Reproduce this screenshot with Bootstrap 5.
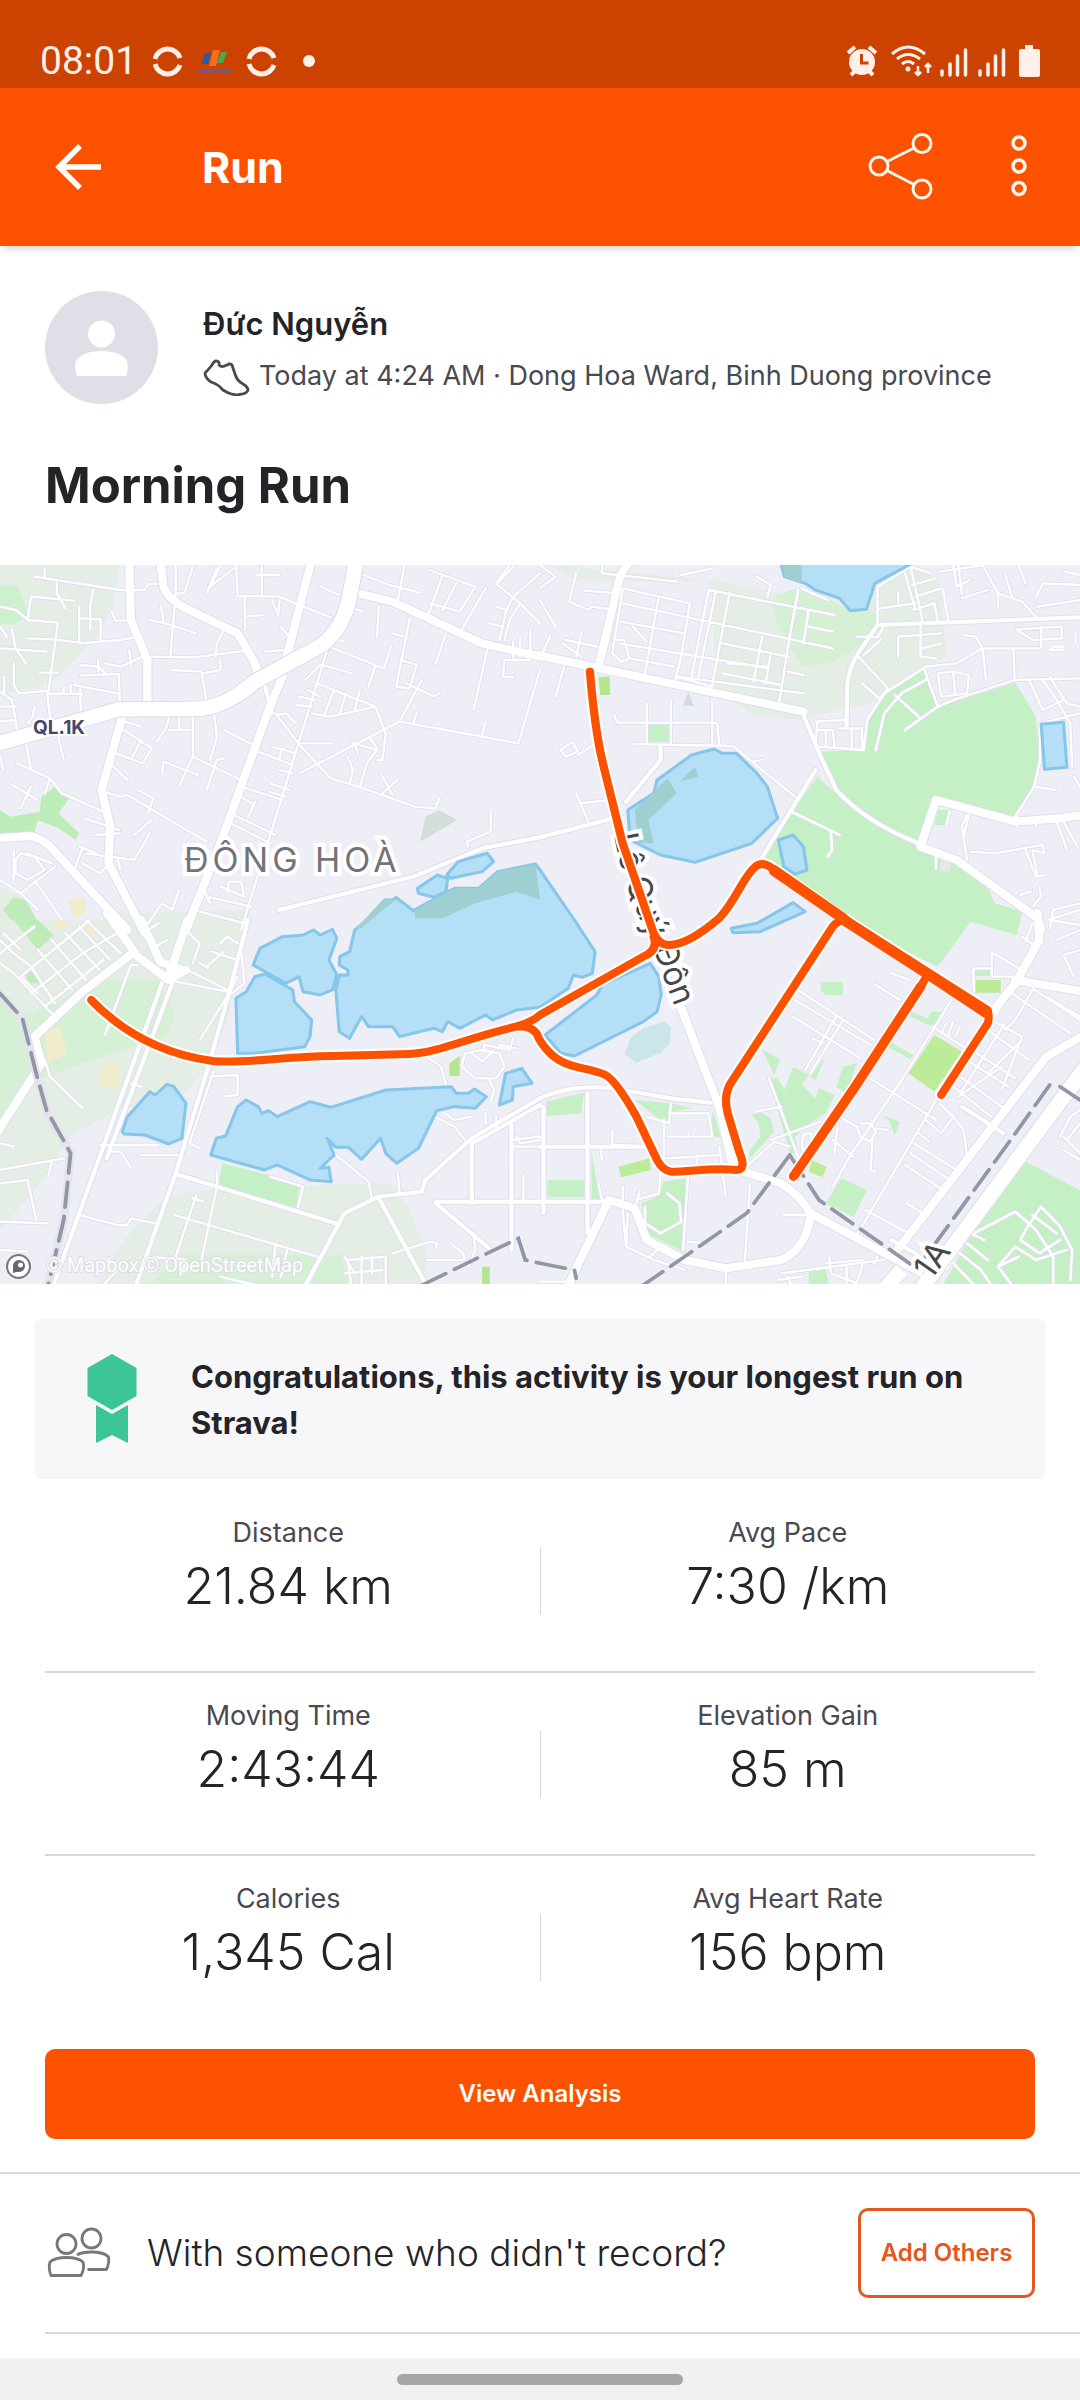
<!DOCTYPE html>
<html lang="en">
<head>
<meta charset="utf-8">
<meta name="viewport" content="width=device-width, initial-scale=1">
<title>Run</title>
<link rel="stylesheet" href="https://cdn.jsdelivr.net/npm/bootstrap@5.3.0/dist/css/bootstrap.min.css">
<style>
  body { font-family: Inter, "Noto Sans", sans-serif; color: #242428; background: #fff; }
  .status-strip { background: #cc4200; height: 88px; padding: 34px 40px 0 40px; color: #fff0ea; }
  .status-clock { font-family: Roboto, sans-serif; font-weight: 400; font-size: 39px; line-height: 54px; }
  .app-head { background: #fc5200; height: 158px; padding: 0 44px 0 41px; box-shadow: 0 6px 8px -4px rgba(0,0,0,.2); position: relative; }
  .app-head h1 { font-size: 43px; line-height: 56px; margin-left: 93px; }
  .plain-btn { background: none; border: 0; padding: 0; color: #fff; line-height: 0; }
  .share-btn { margin-right: 45px; }
  .side-pad { padding-left: 45px; padding-right: 45px; }
  .athlete { padding-top: 45px; gap: 45px; }
  .athlete-name { font-size: 31px; line-height: 40px; font-weight: 600; margin-top: 4px; }
  .meta-text { font-size: 27px; line-height: 36px; color: #494950; margin-top: 12px; }
  .activity-title { font-size: 49px; line-height: 60px; margin: 52px 0 49px; font-weight: 700; }
  .route-map { display: block; width: 100%; height: auto; background: #eeeff6; }
  .notice { background: #f7f7fa; border-radius: 8px; margin: 35px 34px 11px; padding: 35px 40px 33px 53px; gap: 54px; }
  .notice p { font-size: 31px; line-height: 46px; font-weight: 700; }
  .stat-row { height: 183px; border-bottom: 2px solid #d9d9dc; }
  .stat-row:last-child { border-bottom: 0; }
  .stat-cell { padding-top: 25px; text-align: center; flex: 1 1 50%; }
  .stat-cell dd { font-size: 50px; line-height: 60px; margin: 5px 0 0; font-weight: 300; }
  .stat-cell dt { font-size: 27px; line-height: 36px; color: #494950; font-weight: 400; }
  .stat-rule { width: 1px; height: 67px; margin-top: 58px; background: #d8d8dc; }
  .big-btn { --bs-btn-bg: #fc5200; --bs-btn-color: #fff; --bs-btn-hover-bg: #e34a00; --bs-btn-hover-color: #fff; border: 0; height: 90px; border-radius: 10px; font-size: 24px; font-weight: 600; margin: 10px 0 33px; }
  .others { border-top: 2px solid #d9d9dc; padding-top: 34px; padding-bottom: 34px; gap: 34px; }
  .others-text { font-size: 37px; line-height: 48px; font-weight: 300; }
  .add-btn { --bs-btn-color: #e5571d; border: 3px solid #e0591f; height: 90px; width: 177px; border-radius: 10px; font-size: 24px; font-weight: 600; padding: 0; }
  .inset-rule { margin-left: 45px; border-top: 2px solid #d9d9dc; }
  .nav-strip { background: #f1f1f1; height: 42px; }
  .nav-pill { width: 286px; height: 11px; border-radius: 6px; background: #a6a6a6; }
  .place-label { font-size: 34px; letter-spacing: 4px; fill: #737379; stroke: #fff; stroke-width: 8px; paint-order: stroke; }
  .ref-label { font-size: 19px; font-weight: 700; fill: #47476b; stroke: #fff; stroke-width: 4px; paint-order: stroke; }
  .road-label { font-size: 33px; fill: #46464c; stroke: #fff; stroke-width: 8px; paint-order: stroke; }
  .credit-label { font-family: Roboto, sans-serif; font-size: 20px; fill: #fff; stroke: #dcdce4; stroke-width: 2px; paint-order: stroke; }
</style>
<script src="https://cdn.jsdelivr.net/npm/bootstrap@5.3.0/dist/js/bootstrap.bundle.min.js"></script>
</head>
<body class="d-flex flex-column min-vh-100">

<div class="status-strip d-flex align-items-center justify-content-between">
  <div class="d-flex align-items-center">
    <span class="status-clock">08:01</span>
    <svg class="ms-3" width="163" height="32" viewBox="156 45 163 32" aria-hidden="true">
      <g fill="none" stroke="#fff0ea" stroke-width="5">
        <path d="M158 59A13 13 0 0 1 183 58M158 64A13 13 0 0 0 183 65"/>
        <path d="M252 59A13 13 0 0 1 277 58M252 64A13 13 0 0 0 277 65"/>
      </g>
      <path fill="#1b62ae" d="M208 53h6l-3 11h-6z"/><path fill="#f37021" d="M216 50h7l-4 16h-7z"/><path fill="#44ad4b" d="M224 52h6l-4 11h-6z"/>
      <path stroke="#6c5a92" stroke-width="3" stroke-dasharray="3 1" d="M201 71H234"/>
      <circle cx="312" cy="61" r="6" fill="#fff0ea"/>
    </svg>
  </div>
  <svg width="194" height="34" viewBox="846 44 194 34" aria-hidden="true" fill="#fff0ea">
    <circle cx="862" cy="62" r="13"/><path d="M848 53l7-6M876 53l-7-6M851 75l5-5M873 75l-5-5" stroke="#fff0ea" stroke-width="4"/>
    <path d="M861.500 54v9h7" fill="none" stroke="#cc4200" stroke-width="3"/>
    <g fill="none" stroke="#fff0ea" stroke-width="3"><path d="M892 54Q908 40 925 54M897 59Q908 50 920 59M902 64Q908 59 914 64"/><path d="M918 66v9M915 72l3 3 3-3M928 73v-9M925 67l3-3 3 3" stroke-width="2.500"/></g>
    <circle cx="908" cy="69" r="2.500"/>
    <g stroke="#fff0ea" stroke-width="3.500" stroke-linecap="round"><path d="M942 71v4M950 64v11M957.500 56v19M965.500 50v25M980 71v4M988 64v11M995.500 56v19M1003.500 50v25"/></g>
    <path d="M1025 45h8v4h5q2 0 2 2v24q0 2-2 2h-17q-2 0-2-2V51q0-2 2-2h4z"/>
  </svg>
</div>

<header class="app-head d-flex align-items-center">
  <button class="plain-btn ps-2 ms-1" type="button" aria-label="Back">
    <svg width="56" height="50" viewBox="54 142 56 50" fill="none" stroke="#fff" stroke-width="5.500"><path d="M81 146L60 167L81 188M60 167H102"/></svg>
  </button>
  <h1 class="fw-bold text-white mb-0 me-auto">Run</h1>
  <button class="plain-btn share-btn" type="button" aria-label="Share">
    <svg width="66" height="70" viewBox="866 132 66 70" fill="none" stroke="#fff6ee" stroke-width="3"><circle cx="878" cy="166" r="9"/><circle cx="921" cy="143.500" r="9"/><circle cx="921" cy="189" r="9"/><path d="M886 161.500L913 148M886 170.500L913 184.500"/></svg>
  </button>
  <button class="plain-btn" type="button" aria-label="More options">
    <svg class="ms-4" width="34" height="70" viewBox="1002 132 34 70" fill="none" stroke="#fff6ee" stroke-width="3.500"><circle cx="1019" cy="143" r="6"/><circle cx="1019" cy="166" r="6"/><circle cx="1019" cy="188.500" r="6"/></svg>
  </button>
</header>

<main>
  <section class="side-pad">
    <div class="athlete d-flex align-items-center">
      <svg class="flex-shrink-0" width="113" height="113" viewBox="0 0 113 113" role="img" aria-label="Profile photo"><circle cx="56.500" cy="56.500" r="56.500" fill="#dfdfe8"/><circle cx="56.500" cy="43" r="13.500" fill="#fff"/><path fill="#fff" d="M32 85q-3-8-1-15q6-10 25.500-10T82 70q2 7-1 15z"/></svg>
      <div>
        <div class="athlete-name">Đức Nguyễn</div>
        <div class="d-flex align-items-center meta-text">
          <svg class="me-2 flex-shrink-0" width="48" height="40" viewBox="202 356 48 40" fill="none" stroke="#494950" stroke-width="2.800" stroke-linejoin="round"><path d="M204 373Q204 378 210 382Q217 384 222 390Q231 396 238 394.500Q246 394 247 390Q247 387 242 384Q236 381 234 374L231 365Q229 363 226 365Q220 368 218 365Q219 361 215 361Q213 361 211 365Q208 369 204 373Z"/></svg>
          <span>Today at 4:24 AM · Dong Hoa Ward, Binh Duong province</span>
        </div>
      </div>
    </div>
    <h2 class="activity-title">Morning Run</h2>
  </section>

  <svg class="route-map" viewBox="0 0 1080 719" role="img" aria-label="Map of the run">
    <defs>
      <!-- The map is drawn on four tiles: north-west, north-east, south-west, south-east -->
      <g id="roads-s" fill="none" stroke-linejoin="round" stroke-linecap="round">
        <g transform="translate(0,-5) scale(.3444,.3333)">
          <path d="M100,50L350,90H420L430,72H455M130,25V55M165,60V100L190,145M90,110L215,122M90,110L80,180L168,188L140,400M230,140V250L350,240L390,232M235,175L292,178V240M270,90L262,140V210M325,155L335,182H372M0,140L45,150L80,178M0,265L135,275M35,210L45,265L75,310M80,235L150,238L235,248M0,200L20,230M40,310V375L55,400L140,392M115,338H170M232,315L285,320L305,340M285,295V335M235,347L345,342M305,310L350,320L415,290M375,270L380,320M345,345L348,430M140,400L240,402M215,375L340,400M232,380L235,460M185,380V400M205,375V400M0,440H45M0,485L45,480M0,395L35,420L50,510M12,350V400M137,400L145,470L165,510L185,600M100,440L95,470L80,490M75,550L90,630L50,610M90,630L145,655L180,700L300,755M145,655L130,700M35,675L110,720M60,745L90,680M0,590L10,630M435,290L560,292L720,272M500,330L585,335L600,425M590,340L640,330V300M650,210L630,250L625,290M510,15V100L495,285M435,180L480,190L570,220M468,140L475,190M510,100H535L560,20M600,100L630,25M640,15L610,80L660,40L690,15M685,15L690,108L810,110L960,172M760,20V105M745,45H810M790,120L808,165L812,120M712,170L765,165M710,110L712,210M815,200L840,230M770,275L850,268M560,450V590L520,680M495,460L480,510L455,545M490,510H550M520,460V510M620,450L630,530L610,600M560,590L700,660M650,510L745,560M600,690L630,600L650,595M470,640L475,605L575,645M360,510L440,565L415,610L335,580M410,540L385,590M300,695L350,710L370,705L600,845M400,690L445,715L430,760M440,780L390,825M320,610L370,660M245,775L345,810M275,825L350,820M350,480L410,500"/>
          <path d="M1055,45L1130,75L1220,98M930,80L985,105M1175,15L1155,120M1245,30L1380,80L1335,155L1250,130M1285,45L1245,160M1325,70L1285,150M1410,85L1340,210M1295,220L1265,310M1415,270L1375,450M1025,145L1055,155M1100,140L1095,230M1190,175L1150,380L1190,385L1210,315L1165,300M1140,220L1170,230M1135,260L1115,325L1085,315M970,235L1000,245M955,260L1090,315L1070,380M950,270L700,1110M935,315L1020,340M885,360L930,315M920,370L1090,440L960,470L905,460M970,390L940,470M1005,400L985,465M1045,390L1030,450M865,410L915,420M860,435L905,440M1090,440L1120,520M1225,360L1160,485L870,640M1160,485L1505,550L1568,330M1180,370L1260,410L1275,400M1210,460L1200,490M1400,525L1410,485M800,460L870,555L960,655L1040,680L1205,740L1265,745L1275,715M805,465L830,460L860,490M870,550H965M1120,520L1110,600H1095M1025,550L1095,570L1065,610L1045,680M1030,555L1040,580M1075,535L1095,565M1010,590L1025,630L1015,670M1105,640L1140,705M1155,660L1110,700M790,560L860,580M750,575L850,615M810,630L850,640M820,565L810,600M785,670L840,690M780,695L830,710M700,680L820,720M680,765L800,825M670,790L785,850M740,725L720,775M690,705L730,730M1360,860L1355,845L1425,815V755M1440,75L1490,20M1480,15L1440,70L1510,130L1568,190M1440,140L1470,150L1490,110L1568,40M1470,150L1450,240M1510,130L1480,180L1465,240M1420,190L1460,200M1490,245V300M1510,230V290M1540,210V290M1460,350L1465,300H1540M1460,350L1490,352M895,390L930,410M0,960L60,1000L160,920M40,870V960M60,880L100,890L130,930L80,960L45,940V900ZM80,880L150,910M100,960L180,1080M60,1000L110,1050M220,920L240,860M250,880L390,900L435,820M230,860L280,880M340,890L350,930M240,910L290,940L310,920M430,1090L470,1030L500,1050L520,990M600,1010L730,1040M580,1055L710,1090M640,980L710,1010L700,965H665L660,1000M590,985L610,1030"/>
        </g>
        <g transform="translate(540,-5) scale(.3444,.3333)">
          <path d="M0,15L45,50L0,85M0,120L45,200M180,15V40L400,65M410,45L500,25M240,85L435,130L410,290L390,370M345,110L305,340M240,130L850,265M235,185L420,220M230,250L520,300L665,325M260,295L390,320M215,240H245L260,295L235,305L210,280L240,90M270,200L310,245M490,90L440,350M510,95L460,350M550,100L500,375M490,90L855,165M750,90L725,230L695,425M760,85L835,120M630,50L670,75L660,110M780,150L765,250M780,200L850,215M645,230L620,365M670,280L655,370M530,250L720,290M545,310L660,320M400,350L765,400M530,340L700,375M395,350L500,380M720,335L765,345M130,92L225,100M105,40L85,125L140,150L150,140L215,150M75,240L165,260M65,250L120,290M120,220L105,290M70,320L45,410M30,225L0,300M215,465L225,488H500L515,490L520,550M275,552L560,558L740,710M310,430V550M380,425V550M500,425V550M620,605L645,600M60,570L95,545L110,575L75,590ZM110,585L155,555M105,700L140,785M115,730L205,720M980,80V190M980,80L1075,20L1135,40M1060,40L1085,130M985,145L1090,130L1085,150L1145,130L1155,185M1040,95V130M1075,15L1110,180M1080,75L1150,55M1090,110L1165,85M1170,90L1185,180M1200,15L1210,80L1250,60M1215,15L1225,100M1285,15L1330,100L1400,125L1440,170M1330,100V145M1350,40L1370,110M1225,115L1300,90M1390,15L1410,70M1440,110L1460,70L1568,75M1525,35L1568,45M1445,140L1568,120M1160,35L1290,15M990,240L940,285M920,230L980,232L1000,195M925,290L1010,385L985,420M935,370L985,415M1105,185V290L1150,295M1040,290V230L1165,220M1110,265L1165,250M1230,225L1265,230L1285,265H1455V200M1285,265L1295,360M1375,265L1378,360M1385,208L1515,200V235L1430,240L1385,210M1480,270H1520V260H1490ZM1120,320L1210,310L1285,265M1120,320L1000,400L950,480L940,570L810,560M1115,325L1155,440L1060,510M1155,440L1200,420L1378,360L1568,355M1155,340L1200,335L1245,345L1240,400L1165,410ZM1200,335L1205,400M1120,360L1050,400L1000,460L975,570M1030,405L1105,475M800,485L890,480M805,510H850L855,560M870,505H935V565M905,505V565M830,510V560M800,560L805,485M1420,360L1460,450L1520,420M1460,360L1500,420L1540,490M1480,350L1530,430L1568,440M1380,770L1435,680L1452,600V490L1568,460M1540,490L1545,620M1435,680L1495,690M1550,650L1568,680M730,755L870,825M845,815L848,870L835,890M1150,885V925M1190,755L1180,795M1240,765L1225,800L1240,900M1245,765L1230,830M1500,785L1530,870M1520,785L1560,860M1385,770V800M1440,770V800M1250,875L1320,880L1460,855L1465,880L1430,870M1410,870L1440,950L1470,945M1430,870L1445,950M1395,1005L1425,995M1450,980L1455,1010L1430,1040M1480,1110L1490,1050L1568,1030M1475,1080L1568,1050M1555,220V250"/>
        </g>
        <g transform="translate(0,355) scale(.3444,.3333)">
          <path d="M0,60L40,100L90,140L160,250M0,130L40,160L150,280M60,170L190,60L260,0M0,100L100,20M150,60L250,180M190,40L290,150M110,90L210,210M230,20L320,120M90,220L240,100L340,40M130,260L300,120M60,170L110,220M250,0L350,100M10,40L60,90M400,135H380L310,330L305,345M430,30L460,10M445,85L485,60M550,40L580,70L560,130M600,140L650,95M640,70L660,50L690,70M545,150L660,210M510,185L660,215M615,95L690,120M580,130L605,145M690,170L665,220L580,360M700,90L710,190L660,230M130,420L145,470L240,565M0,670L40,680M0,750L185,715M140,770L150,725M0,790L80,780L105,900M0,905L140,910M230,885L340,915H370L380,895L450,910M0,990L80,995M290,675H460M320,695H350L378,740M410,705H515M610,470L690,465L690,525L650,530M620,455L550,670L580,685M380,490L410,500M505,885L920,1010M570,825L510,1010M630,755V800L585,1020M560,835L590,845M800,975L790,1070M835,985L815,1070M785,770L880,800L865,860M970,700L1070,785L1080,835M1155,760L1160,820M1240,410L1280,440L1295,495M1350,400L1400,390L1450,400L1465,440L1440,475H1380L1340,440ZM1370,400L1400,425L1430,395M1405,370V395M1420,480L1435,510L1425,545M1410,375L1480,390L1490,355M1450,375L1500,385M1260,590L1320,620L1350,660M1290,580L1320,600L1370,590M1410,580V610M1440,590V620M1490,660L1568,650M1500,650L1510,670L1568,660M1490,680H1568M1520,765V840M430,1010L540,1020L530,1060M1000,1010L1030,1060M1050,1010V1095M1020,1095L1010,1020L1120,1010V1095M1080,1010V1060M1140,1000L1250,965L1270,970L1265,985M1310,970L1345,1000L1350,1020L1240,1020M1375,940L1380,990L1360,1040M1000,1060L1110,1050M640,1070L740,1095M340,1050L300,1095"/>
        </g>
        <g transform="translate(540,355) scale(.3444,.3333)">
          <path d="M750,210L970,360M740,240L960,375M735,290L930,415M860,290L770,450M880,300L785,460M790,355L820,370M975,195L1045,240M1020,160L1075,180M935,460L1150,600M1195,240L1050,480L905,700L850,800M665,475L760,740M670,660L815,605M625,575L700,560M605,735L680,665L725,680M760,660L770,640L790,640L785,690L765,700ZM870,590L920,620L930,650L960,665L975,635L960,610L930,610M975,625L1010,630M865,610L855,700M850,660L910,710M965,665L960,750L975,755M1150,540L940,910L910,960M1160,550L1200,590L1230,630L1240,710M1120,600L1165,640L1200,590M1100,640L1130,665M1085,670L1210,750M1075,700L1190,780M1060,735L1170,810M1200,500L1310,590M1220,470L1340,560M1215,530L1340,440M1240,420L1360,500M1260,395L1380,475M1300,330L1420,420M1310,300L1400,350L1340,510M1350,310L1220,520M1390,370L1300,460M1380,300L1350,330M1370,220L1540,340M1430,210L1380,300M1430,205L1568,300M1470,230L1568,290M1310,95L1390,145M1312,95V170H1385M1260,215L1258,145H1310M1140,320L1235,385M1180,310L1165,340M1200,305L1185,345M1220,320L1205,350M945,870L1060,935M1065,850L1110,880M705,885H780M610,790L595,1020M540,830L530,760M375,580H490L500,650H370M360,600V720M310,590L375,610L380,550M365,715L520,705M520,680L530,750M455,705V730M430,640V655M340,680L205,675M210,630V670M175,680L180,720M170,790L180,840L210,850M240,800V850M290,810L280,850M350,760L345,820L280,840M430,770L415,990M305,860V910L350,940L410,905L405,850L370,820M240,870L250,980L330,1020L420,1050M250,980L255,880M430,965L480,970M320,1010L340,990M700,1060L1000,1020M840,1010L845,1060L920,1090L940,1020L830,1030M720,1070L730,1095M890,1040V1095M970,1030L980,1010M540,1050V1095M690,1080L760,1070M1410,65L1430,10M1400,50L1440,80M1480,0L1568,15M1500,60L1568,30M1520,105L1550,170M1520,105L1568,90M1360,220L1300,330M1180,1050L1250,940L1290,960M1260,940L1380,875L1440,930L1490,1010V1095M1410,930L1455,860L1510,920L1545,990L1540,1080M1380,980L1440,1020L1530,990M1420,910L1395,960L1450,1000L1510,960M1380,980L1330,1040L1370,1095M1330,1040L1390,1010M1220,1000L1280,1050L1310,1095M1240,970L1300,1020M1200,1030L1260,1095M1430,885L1500,940M1510,650L1540,590L1568,570M1530,660L1568,610M1520,690L1568,720M1520,650L1568,700M0,1085H80"/>
        </g>
      </g>
      <g id="roads-m" fill="none" stroke-linejoin="round" stroke-linecap="round">
        <g transform="translate(0,-5) scale(.3444,.3333)"><path d="M810,1050L1200,950L1400,865L1568,832M770,380L790,460"/></g>
        <g transform="translate(540,-5) scale(.3444,.3333)"><path d="M0,832L215,775M350,560V600L250,725M765,465L815,590L860,690Q950,790 1100,850M800,630L640,900M980,195L1568,172M980,195L920,285Q895,330 892,380L890,500"/></g>
        <g transform="translate(0,355) scale(.3444,.3333)"><path d="M500,190L310,715M470,190L300,680L150,1110M605,440L510,760L390,1110M720,0L665,220L605,440M510,762L975,910M880,1110L1000,880L1100,830L1225,815L1235,780L1370,655L1568,535M1265,845H1568M1370,655V850M1485,615V990M1265,850L1420,985M1568,555L1380,665M1100,835L1240,1100"/></g>
        <g transform="translate(540,355) scale(.3444,.3333)"><path d="M0,535Q80,495 200,503L380,535L495,548M0,680H340M0,845H200M10,560V880M138,520V940M1225,560L1345,640M1020,960L1090,1000"/></g>
      </g>
      <g id="roads-l" fill="none" stroke-linejoin="round" stroke-linecap="round">
        <g transform="translate(0,-5) scale(.3444,.3333)"><path d="M375,0L380,180L428,300V440M465,0L475,80Q490,120 540,145L690,220L740,310L755,360M905,0L830,300M355,470L295,690L320,800L315,910L420,1120M820,350L780,450L640,850L540,1110M1040,100L1140,125L1400,250L1568,290M-10,835L90,828Q130,840 150,865L370,1110"/></g>
        <g transform="translate(540,-5) scale(.3444,.3333)"><path d="M-10,285L765,455M265,0Q235,30 225,80L170,320M1580,765L1510,775L1380,785L1150,720L1105,860L1210,900L1445,1075L1455,1110"/></g>
        <g transform="translate(0,355) scale(.3444,.3333)"><path d="M310,-20L400,110L490,180L540,150M410,0L465,125L530,150M545,0L490,170M390,95L240,215L100,350L120,430L-10,640"/></g>
        <g transform="translate(540,355) scale(.3444,.3333)"><path d="M405,250L520,560L560,740M590,755L700,790Q760,830 785,880L1110,1060M785,890Q770,990 700,1020L540,1045L420,1020L310,960L275,865L200,840L80,1100M1445,-20L1450,60L1380,190L1310,280M1380,180L1580,215M1580,345L1470,410L1030,1000"/></g>
      </g>
      <g id="roads-xl" fill="none" stroke-linejoin="round">
        <g transform="translate(0,-5) scale(.3444,.3333)"><path d="M-10,552L345,448L570,447Q650,445 740,365L935,255Q1000,200 1015,110L1035,0"/></g>
        <g transform="translate(540,355) scale(.3444,.3333)"><path d="M1600,420L1090,1130M1050,1050L990,1120"/></g>
      </g>
    </defs>

    <!-- land cover -->
    <g transform="translate(0,-5) scale(.3444,.3333)">
      <path fill="#e4eee4" d="M0,15H345L330,130L280,230L170,350L110,385L0,400ZM0,980L60,1010L110,1115H0ZM330,1060H420L730,1050L710,1115H330Z"/>
      <path fill="#cdf0cd" d="M0,75H50L85,170L30,195L0,190Z"/>
      <path fill="#bdecb8" d="M0,750L30,770L115,755L120,710L160,680L205,710L170,760L230,820L220,840L170,805L110,780L100,820L0,830ZM10,1050L40,1010L75,1020L125,1115H60Z"/>
      <path fill="#d3dedb" d="M1220,845L1235,770L1275,750L1328,780Z"/>
    </g>
    <g transform="translate(540,-5) scale(.3444,.3333)">
      <path fill="#e4eee4" d="M30,15L90,55L190,60L370,65L500,60L700,100L1070,15L1160,60L1180,290L960,430L740,480L620,465L510,380L500,110L490,60Z"/>
      <path fill="#d5f0d3" d="M700,100L760,80L900,150L980,160L960,240L850,305L765,320L690,200L675,120Z"/>
      <path fill="#c5efc5" d="M1115,320L1155,440L1380,368L1440,470L1450,600L1430,690L1380,770L1150,720L1100,850L980,800L860,700L805,575L940,570L950,490L1000,400ZM805,650L860,700L980,800L1100,855L1200,890L1300,980L1320,1030L1400,1055L1385,1125L1250,1085L1155,1220L880,1080L640,900L730,760ZM313,495H378V545H313ZM1155,750H1195L1185,795H1145Z"/>
      <path fill="#b5e68c" d="M170,352L202,350L204,405L175,405Z"/><path fill="#cfdddb" d="M415,437L430,397L447,437Z"/>
      <path fill="#e6e6ec" d="M1165,895L1195,900L1190,935H1160Z"/>
    </g>
    <g transform="translate(0,355) scale(.3444,.3333)">
      <path fill="#e4eee4" d="M0,0H720L660,300L600,440L540,520L350,570L210,640L110,800L0,930ZM520,820L700,800L1130,790L1180,850L1240,1000L1230,1095H280L360,960L460,850Z"/>
      <path fill="#d6f0d6" d="M310,180H460L510,290L480,350L240,430L110,480L60,540L0,620V210L60,290L200,230ZM530,1005H990L1010,1095H430Z"/>
      <path fill="#bdecb8" d="M40,0H110L155,45L110,90ZM70,155L90,145L120,190L85,190Z"/>
      <path fill="#c5efc5" d="M645,730L870,790L860,865L635,800Z"/>
      <path fill="#b5e68c" d="M1305,430L1335,408V468H1305ZM1400,1040H1422V1095H1400Z"/>
      <path fill="#efedcb" d="M130,330L175,320L195,400L140,430ZM300,430L350,425L340,510L285,495ZM195,-60L250,-70V-25L215,-10ZM150,10L180,-10L195,15L170,35ZM235,25L255,10L275,45L255,60Z"/>
    </g>
    <g transform="translate(540,355) scale(.3444,.3333)">
      <path fill="#c5efc5" d="M18,545L128,518L120,580L20,588ZM22,780H130V832H22ZM815,185H880V225H830L815,210ZM1258,148H1310V168H1258ZM1075,275L1125,295L1135,275H1168L1140,320L1075,290ZM1010,362L1085,405L1075,418L1010,380ZM645,388L697,418L680,465ZM735,440L780,465L760,495L800,535L810,505L855,525L830,580L790,605L740,650L750,700L725,700L665,475H690L710,510ZM830,408L800,480L785,470ZM880,440L920,430L890,520L860,500ZM615,585L640,575L670,595L680,635L640,680L605,720L610,690L640,650L635,610ZM275,540L380,550L440,565L380,575L375,610L350,600ZM500,570L525,650H500ZM358,785L425,775L415,995L310,940L295,850L350,825ZM150,700L175,850H150ZM875,775L950,810L910,890L830,850ZM990,585L1045,605L1030,645L1012,600ZM1410,725L1568,810V1095H1170L1250,950ZM780,1055L830,1050L840,1095H780Z"/>
      <path fill="#bcec98" d="M1262,180H1338V218H1262ZM1145,345L1225,395L1145,515L1070,460ZM228,740L318,715L322,750L235,772ZM790,720L832,740L820,772L780,755Z"/>
      <path fill="#cbe6ea" d="M245,402L265,350L300,325L360,305L380,320L378,370L350,398L280,428Z"/>
    </g>

    <!-- roads: edge first, then white surface -->
    <use href="#roads-s" stroke="#e0deed" stroke-width="12"/>
    <use href="#roads-m" stroke="#e0deed" stroke-width="18"/>
    <use href="#roads-l" stroke="#e0deed" stroke-width="30"/>
    <use href="#roads-s" stroke="#fff" stroke-width="7"/>
    <use href="#roads-m" stroke="#fff" stroke-width="12"/>
    <use href="#roads-l" stroke="#fff" stroke-width="24"/>
    <use href="#roads-xl" stroke="#e0deed" stroke-width="50"/>
    <use href="#roads-xl" stroke="#fff" stroke-width="43"/>

    <!-- water -->
    <g fill="#b4dff7" stroke="#86c6eb" stroke-width="9" stroke-linejoin="round">
      <g transform="translate(0,-5) scale(.3444,.3333)"><path d="M1297,945L1330,905L1415,880L1433,905L1400,935L1310,955ZM1212,985L1270,945L1300,955L1295,995L1260,1012L1215,1000Z"/></g>
      <g transform="translate(0,355) scale(.3444,.3333)"><path d="M1030,30L1150,-68L1200,-28L1320,-95H1390L1445,-145L1555,-168L1568,-150L1668,0L1728,95L1720,160L1690,172L1665,165L1650,205L1568,262L1500,270L1430,300L1410,285L1335,325L1300,305L1285,335L1260,325L1160,350L1140,320H1070L1050,290L1015,355L985,335L975,210L985,165H1010V150L985,135L987,110L1015,95ZM735,135L755,85L820,50L880,45L910,30L930,45L965,28L978,55L955,120L978,165L965,210L930,225L880,215L868,170L830,190ZM685,235L715,215L740,170L770,162L850,210L855,245L905,300L900,350L885,380L740,400H690ZM355,635L370,590L435,515L450,525L485,493L505,500L540,550L528,655L490,672L420,645L360,642ZM612,705L628,655L655,648L690,560L715,540L750,560L760,580L780,572L805,590L900,545L960,562L1120,510L1310,500L1325,520H1360L1378,507L1412,530L1380,565L1320,560L1268,572L1215,685L1152,730L1120,700L1105,655L1050,718L1012,682H975L950,655L970,705L930,745L955,742L962,785L900,780L805,735L768,750ZM1450,555L1468,460L1515,445L1545,490L1490,500L1488,540Z"/></g>
      <g transform="translate(540,-5) scale(.3444,.3333)"><path d="M698,5L710,50L770,70L800,90L870,115L900,152L948,148L972,70L1090,5ZM255,750L330,700L340,660L440,585L505,567L530,580H570L630,640L660,680L690,775L615,850L450,907L350,885L262,840ZM692,840L735,825L765,860L775,930L740,942L708,920ZM555,1105L630,1090L735,1028L770,1055L640,1115L560,1118ZM1455,492L1520,487L1530,622L1465,628Z"/></g>
      <g transform="translate(540,355) scale(.3444,.3333)"><path d="M15,345L165,225L180,195L320,130L345,170L352,225L340,275L300,305L100,408L60,400Z"/></g>
    </g>
    <g fill="#a0cfd2">
      <g transform="translate(0,-5) scale(.3444,.3333)"><path d="M1205,1075V1050L1320,985H1390L1445,935L1555,912L1568,1020L1500,995L1380,1030L1285,1075ZM1035,1105L1115,1015L1150,1015L1050,1105Z"/></g>
      <g transform="translate(540,-5) scale(.3444,.3333)"><path d="M335,690L370,655L397,700L315,780L330,850H285L275,750ZM405,665L450,620L460,650ZM705,15H760V72L710,50Z"/></g>
    </g>

    <!-- ward boundary -->
    <g fill="none" stroke="#9297a5" stroke-width="11" stroke-linecap="round" stroke-dasharray="75 28">
      <g transform="translate(0,355) scale(.3444,.3333)"><path stroke="#e4e3ee" stroke-width="24" stroke-dasharray="none" d="M0,220L65,295L105,460L135,570L205,700L185,900L140,1095"/><path d="M0,220L65,295L105,460L135,570L205,700L185,900L140,1095M1125,1098H1220L1505,955L1525,1020L1568,1030"/></g>
      <g transform="translate(540,355) scale(.3444,.3333)"><path d="M1480,495L1370,655L1120,1010M725,705L600,880L420,1010L300,1095M725,705L810,840L1100,1050M1510,500L1568,540M0,1030L100,1050L105,1075"/></g>
    </g>

    <!-- labels under the route -->
    <path id="road-line" fill="none" d="M614,270C624,325 640,352 656,392L700,510"/>
    <text class="road-label"><textPath href="#road-line">Lê Quý Đôn</textPath></text>
    <text class="place-label" x="184" y="307">ĐÔNG HOÀ</text>
    <text class="ref-label" x="33" y="169">QL.1K</text>
    <text class="road-label" transform="translate(931,716) rotate(-55)">1A</text>

    <!-- run route -->
    <defs><g id="route" fill="none" stroke-linecap="round" stroke-linejoin="round" transform="translate(540,355) scale(.3444,.3333)"><path d="M-1303,240C-1200,350 -1080,405 -950,423C-860,432 -760,410 -600,408L-380,402C-300,400 -200,350 -70,320Q-20,305 0,285L300,110Q345,90 330,50M145,-745Q160,-560 185,-460L240,-230L325,25Q340,75 375,75Q430,75 520,-5C570,-60 590,-130 625,-160Q645,-178 675,-155L880,-5L1300,270Q1305,300 1300,310L1165,525M890,0Q865,0 850,20L560,480Q530,520 545,580L580,700Q600,750 570,750C500,742 440,755 380,755Q355,750 340,720L280,590Q220,480 190,465C140,440 80,450 30,400Q0,370 -10,340Q-30,315 -70,320M1125,165L1105,200L915,500L735,770"/></g></defs>
    <use href="#route" stroke="#fff" stroke-width="36"/>
    <use href="#route" stroke="#fc5200" stroke-width="24"/>
    <path transform="translate(540,355) scale(.3444,.3333)" fill="none" stroke="#fc5200" stroke-width="32" stroke-linecap="round" stroke-linejoin="round" d="M880,-2L1120,158L1293,276M680,-148L880,-5"/>
    <path transform="translate(540,355) scale(.3444,.3333)" fill="none" stroke="#fc5200" stroke-width="28" stroke-linecap="round" stroke-linejoin="round" d="M1105,200L915,500L737,768"/>

    <!-- attribution -->
    <circle cx="18.500" cy="701.500" r="11.500" fill="#fff" stroke="#77787f" stroke-width="2"/>
    <circle cx="19" cy="701" r="6" fill="#66676e"/><path fill="#66676e" d="M13 708v-8l7 6z"/><circle cx="20.500" cy="700" r="2.500" fill="#fff"/>
    <text class="credit-label" x="46" y="707">© Mapbox © OpenStreetMap</text>
  </svg>

  <section class="notice d-flex align-items-center">
    <svg class="flex-shrink-0" width="50" height="92" viewBox="87 1354 50 92" fill="#3bc597" aria-hidden="true"><path d="M112 1354L136.500 1368V1396L112 1410L87.500 1396V1368Z"/><path d="M96 1405L112 1414L128 1405V1443L112 1435L96 1443Z"/></svg>
    <p class="mb-0">Congratulations, this activity is your longest run on Strava!</p>
  </section>

  <section class="side-pad">
    <dl class="mb-0">
      <div class="stat-row d-flex">
        <div class="stat-cell pe-2"><dt>Distance</dt><dd>21.84 km</dd></div>
        <div class="stat-rule"></div>
        <div class="stat-cell"><dt>Avg Pace</dt><dd>7:30 /km</dd></div>
      </div>
      <div class="stat-row d-flex">
        <div class="stat-cell pe-2"><dt>Moving Time</dt><dd>2:43:44</dd></div>
        <div class="stat-rule"></div>
        <div class="stat-cell"><dt>Elevation Gain</dt><dd>85 m</dd></div>
      </div>
      <div class="stat-row d-flex">
        <div class="stat-cell pe-2"><dt>Calories</dt><dd>1,345 Cal</dd></div>
        <div class="stat-rule"></div>
        <div class="stat-cell"><dt>Avg Heart Rate</dt><dd>156 bpm</dd></div>
      </div>
    </dl>
    <button class="btn big-btn w-100" type="button">View Analysis</button>
  </section>

  <section class="others side-pad d-flex align-items-center">
    <svg class="flex-shrink-0" width="68" height="54" viewBox="45 2225 68 54" fill="none" stroke="#77777e" stroke-width="2.800" stroke-linejoin="round" aria-hidden="true"><circle cx="66.500" cy="2243" r="9.500"/><circle cx="91.500" cy="2237.500" r="9.500"/><path d="M51 2274.500Q48 2267 50 2261Q55 2256.500 66.500 2256.500T83 2261Q85 2267 81 2274.500ZM77 2254Q82 2251 91 2251Q104 2251 108.500 2256Q109.500 2262 106.500 2268.500H87.500"/></svg>
    <span class="others-text me-auto">With someone who didn't record?</span>
    <button class="btn add-btn" type="button">Add Others</button>
  </section>
  <div class="inset-rule"></div>
</main>

<footer class="nav-strip mt-auto d-flex align-items-center justify-content-center"><div class="nav-pill"></div></footer>
</body>
</html>
